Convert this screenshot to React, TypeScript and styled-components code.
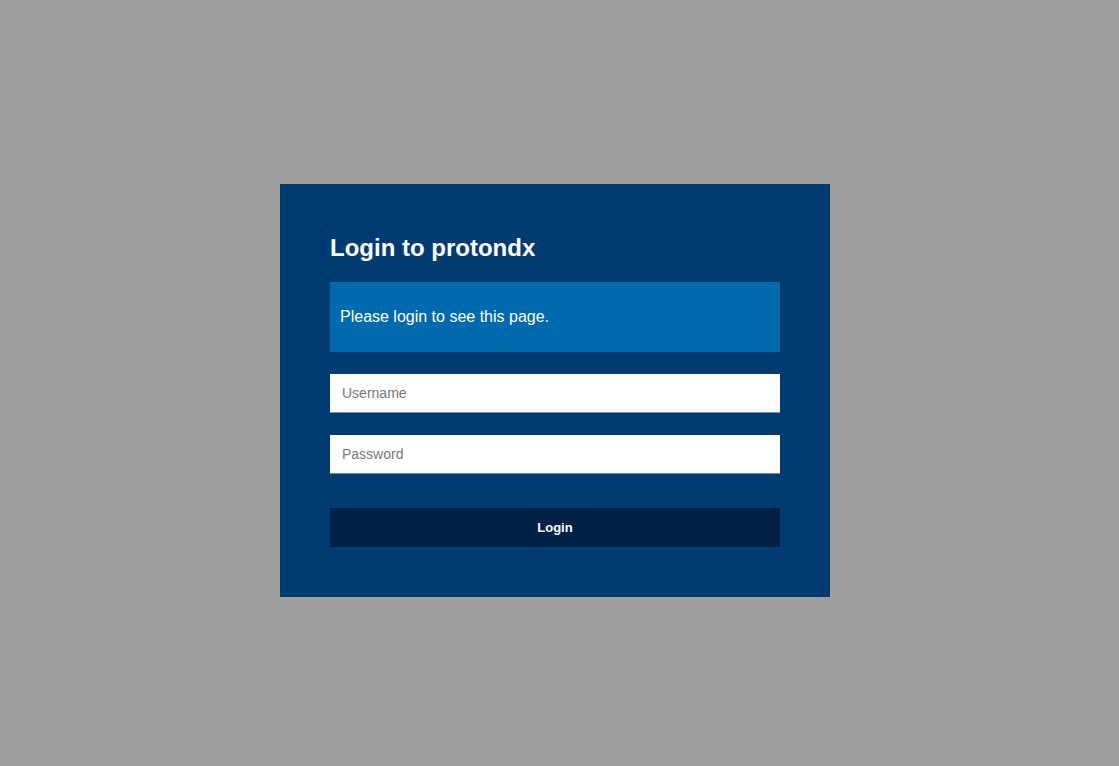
import React from "react";
import styled, { createGlobalStyle } from "styled-components";

const GlobalStyle = createGlobalStyle`
  html, body {
    margin: 0;
    padding: 0;
    background: #9e9e9e;
    font-family: "Liberation Sans", Arial, sans-serif;
  }
  * {
    box-sizing: border-box;
  }
`;

function App() {
  return (
    <>
      <GlobalStyle />
      <Page>
        <Card>
          <Title>Login to protondx</Title>
          <Alert>
            <p>Please login to see this page.</p>
          </Alert>
          <Form onSubmit={(e) => e.preventDefault()}>
            <Field type="text" placeholder="Username" autoFocus />
            <Field type="password" placeholder="Password" />
            <Button type="submit">Login</Button>
          </Form>
        </Card>
      </Page>
    </>
  );
}

export default App;

const Page = styled.div`
  min-height: 100vh;
  display: flex;
  align-items: flex-start;
  padding: 184px 0 0 280px;
`;

const Card = styled.div`
  width: 550px;
  background-color: #003c71;
  padding: 50px;
  color: #fff;
`;

const Title = styled.h2`
  margin: 0 0 20px;
  font-size: 24px;
  font-weight: 700;
  line-height: 28px;
`;

const Alert = styled.div`
  background-color: #006aae;
  padding: 10px;

  p {
    margin: 16px 0;
    font-size: 16px;
    line-height: 18px;
  }
`;

const Form = styled.form`
  display: flex;
  flex-direction: column;
  margin-top: 22px;
`;

const Field = styled.input`
  height: 39px;
  width: 100%;
  border: none;
  border-bottom: 1px solid #6d8fb1;
  padding: 0 12px;
  font-family: inherit;
  font-size: 14px;
  color: #333;
  background: #fff;
  margin-bottom: 22px;

  &::placeholder {
    color: #777;
  }

  &:focus {
    outline: none;
  }
`;

const Button = styled.button`
  height: 39px;
  margin-top: 12px;
  border: none;
  background-color: #002147;
  color: #fff;
  font-family: inherit;
  font-size: 13px;
  font-weight: 700;
  cursor: pointer;
`;
